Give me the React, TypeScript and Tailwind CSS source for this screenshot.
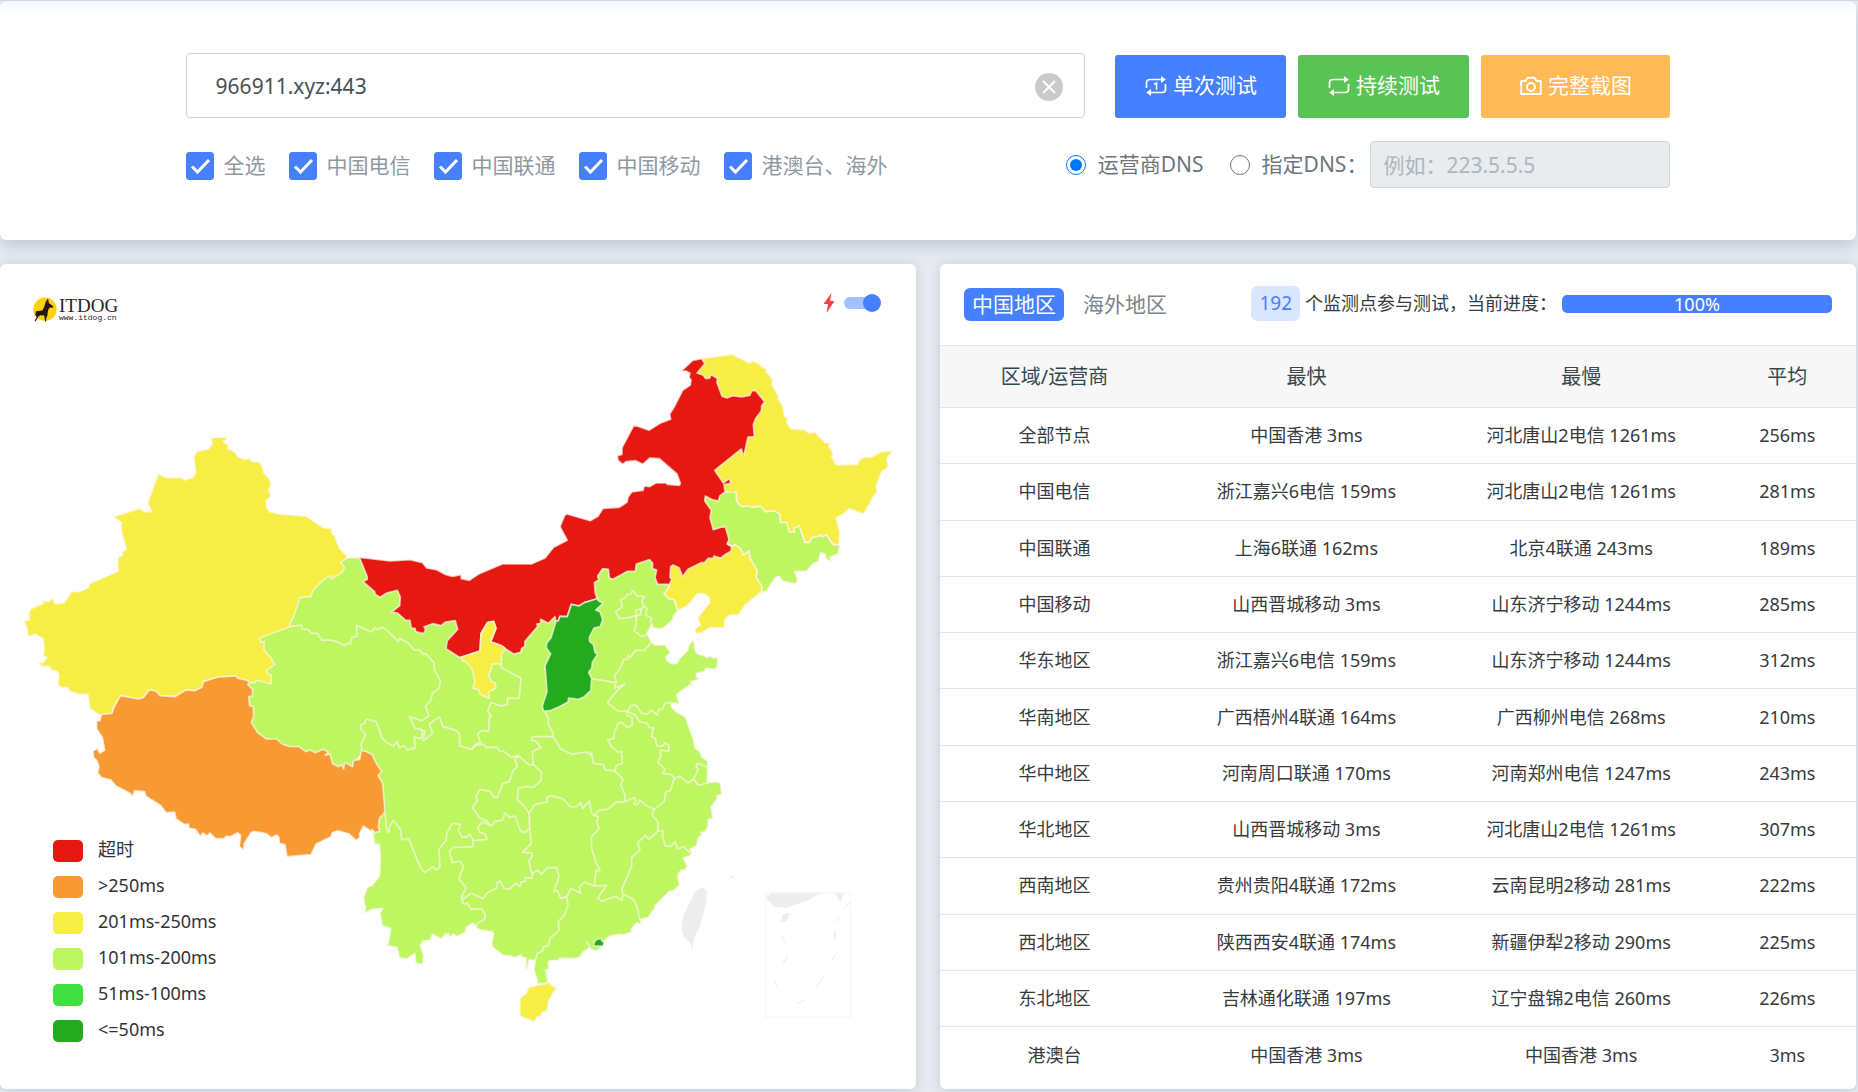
import React, { useState } from 'react';

const font = 'font-["Noto_Sans","Noto_Sans_CJK_SC",sans-serif]';

const operators = ['中国电信', '中国联通', '中国移动', '港澳台、海外'];

const legend = [
  { label: '超时', color: 'bg-[#e61812]' },
  { label: '>250ms', color: 'bg-[#f79a34]' },
  { label: '201ms-250ms', color: 'bg-[#f6ed45]' },
  { label: '101ms-200ms', color: 'bg-[#bef662]' },
  { label: '51ms-100ms', color: 'bg-[#41e041]' },
  { label: '<=50ms', color: 'bg-[#24aa1f]' },
];

const rows = [
  ['全部节点', '中国香港 3ms', '河北唐山2电信 1261ms', '256ms'],
  ['中国电信', '浙江嘉兴6电信 159ms', '河北唐山2电信 1261ms', '281ms'],
  ['中国联通', '上海6联通 162ms', '北京4联通 243ms', '189ms'],
  ['中国移动', '山西晋城移动 3ms', '山东济宁移动 1244ms', '285ms'],
  ['华东地区', '浙江嘉兴6电信 159ms', '山东济宁移动 1244ms', '312ms'],
  ['华南地区', '广西梧州4联通 164ms', '广西柳州电信 268ms', '210ms'],
  ['华中地区', '河南周口联通 170ms', '河南郑州电信 1247ms', '243ms'],
  ['华北地区', '山西晋城移动 3ms', '河北唐山2电信 1261ms', '307ms'],
  ['西南地区', '贵州贵阳4联通 172ms', '云南昆明2移动 281ms', '222ms'],
  ['西北地区', '陕西西安4联通 174ms', '新疆伊犁2移动 290ms', '225ms'],
  ['东北地区', '吉林通化联通 197ms', '辽宁盘锦2电信 260ms', '226ms'],
  ['港澳台', '中国香港 3ms', '中国香港 3ms', '3ms'],
];

// Filled regions, drawn bottom to top
const regions = [
  {
    name: 'mainland',
    fill: '#bef662',
    points:
      '1041,882 1078,880 1110,930 1110,960 1150,960 1215,970 1215,1040 1250,1060 1380,1050 1385,1100 1360,1150 1440,1150 1460,1060 1500,1060 1500,1130 1545,1150 1600,1070 1660,1040 1690,1040 1700,1010 1770,990 1770,940 1810,890 1840,930 1895,905 1900,890 1950,870 1970,890 1980,950 2009,950 2008,968 1992,990 2010,1006 2022,1005 2034,1040 2022,1053 2018,1068 1993,1090 1977,1095 1960,1091 1954,1083 1941,1108 1954,1133 1964,1143 1995,1143 2012,1166 1998,1178 1999,1188 2014,1199 2030,1199 2038,1185 2063,1159 2067,1141 2081,1127 2085,1160 2094,1170 2123,1180 2133,1175 2136,1182 2154,1181 2152,1206 2146,1216 2118,1212 2115,1222 2089,1229 2089,1238 2098,1246 2073,1253 2080,1269 2070,1262 2030,1292 2038,1319 2013,1317 2014,1329 2028,1343 2055,1358 2081,1428 2084,1451 2100,1463 2105,1479 2123,1491 2122,1555 2156,1554 2162,1560 2165,1592 2151,1595 2151,1606 2133,1628 2139,1665 2125,1665 2124,1690 2113,1705 2103,1705 2106,1713 2095,1720 2090,1745 2070,1755 2078,1768 2068,1776 2050,1782 2062,1806 2055,1818 2044,1817 2033,1833 2039,1864 2020,1880 2008,1882 1965,1926 1964,1933 1945,1960 1923,1966 1926,1982 1911,1976 1896,1992 1893,2005 1868,2013 1858,2011 1830,2016 1810,2033 1802,2051 1787,2062 1768,2051 1748,2065 1742,2078 1722,2084 1680,2082 1675,2089 1648,2090 1645,2098 1647,2115 1637,2118 1644,2154 1634,2159 1613,2159 1611,2146 1602,2118 1606,2088 1586,2089 1582,2116 1578,2114 1578,2082 1567,2080 1561,2073 1546,2081 1531,2075 1508,2074 1492,2060 1478,2050 1475,2034 1481,2010 1477,2003 1445,1999 1430,1992 1420,1977 1400,1988 1396,2004 1370,2018 1361,2010 1348,2020 1345,2008 1335,2018 1336,2008 1325,2026 1297,2010 1292,2028 1269,2031 1261,2044 1271,2073 1268,2101 1247,2097 1245,2068 1220,2085 1199,2081 1191,2050 1162,2045 1170,2013 1172,1993 1147,1985 1140,1948 1148,1933 1116,1936 1093,1948 1097,1933 1090,1901 1102,1870 1115,1865 1139,1836 1141,1778 1138,1741 1124,1740 1118,1700 1130,1640 1120,1500 1080,1475 1050,1520 990,1520 960,1480 880,1470 780,1440 740,1390 740,1280 740,1240 790,1240 800,1190 760,1110 860,1050 890,980 970,940 1020,890',
  },
  {
    name: 'jilin',
    fill: '#bef662',
    points:
      '2209,684 2210,711 2225,728 2245,725 2257,730 2282,726 2297,743 2322,739 2341,752 2341,775 2361,775 2368,804 2382,804 2383,791 2398,785 2415,835 2428,835 2434,821 2458,816 2461,810 2465,818 2480,812 2500,842 2517,842 2519,848 2513,870 2490,880 2492,895 2477,884 2476,871 2462,866 2455,893 2440,898 2420,921 2384,923 2393,945 2387,960 2349,951 2336,936 2324,943 2300,981 2283,986 2286,968 2268,941 2271,919 2250,883 2247,861 2230,874 2222,854 2204,842 2195,848 2170,830 2160,800 2120,800 2110,740 2105,700 2112,690 2140,690 2175,675',
  },
  {
    name: 'heilongjiang',
    fill: '#f6ed45',
    points:
      '2105,284 2196,271 2249,298 2257,291 2278,299 2282,307 2300,316 2298,324 2310,335 2318,352 2315,361 2335,395 2334,403 2350,431 2353,458 2363,460 2361,478 2373,494 2412,497 2428,508 2444,504 2476,537 2492,537 2486,548 2500,568 2495,578 2509,603 2573,601 2578,588 2595,580 2615,579 2643,564 2678,561 2660,585 2665,603 2660,613 2646,622 2628,666 2632,682 2615,706 2610,721 2603,726 2592,750 2547,734 2530,750 2509,761 2519,805 2517,842 2500,842 2480,812 2465,818 2461,810 2458,816 2434,821 2428,835 2415,835 2398,785 2383,791 2382,804 2368,804 2361,775 2341,775 2341,752 2322,739 2297,743 2282,726 2257,730 2245,725 2225,728 2210,711 2209,684 2175,684 2150,660 2120,619 2200,540 2230,500 2250,440 2250,400 2200,410 2160,410 2140,360 2110,350 2085,330 2100,300',
  },
  {
    name: 'liaoning',
    fill: '#f6ed45',
    points:
      '2195,848 2204,842 2222,854 2230,874 2247,861 2250,883 2271,919 2268,941 2286,968 2283,986 2278,988 2236,1022 2215,1053 2189,1053 2174,1068 2174,1091 2128,1091 2106,1106 2090,1109 2083,1097 2101,1083 2093,1063 2130,1015 2126,999 2113,989 2092,989 2065,1023 2034,1040 2022,1005 2010,1006 1992,990 2008,968 1995,955 1990,910 2019,890 2048,900 2100,880 2140,860 2180,840',
  },
  {
    name: 'neimenggu',
    fill: '#e61812',
    points:
      '1078,880 1170,891 1230,887 1268,896 1280,912 1310,917 1338,932 1358,937 1383,932 1384,944 1408,949 1438,929 1507,900 1594,900 1635,882 1661,850 1702,829 1680,788 1694,754 1701,750 1771,770 1794,757 1809,733 1858,730 1881,715 1884,700 1895,684 1929,679 1933,666 1948,668 1968,657 1998,657 2002,661 2038,664 2041,658 2031,630 1978,584 1950,582 1928,601 1907,590 1878,593 1868,601 1854,589 1852,575 1866,571 1866,551 1902,483 1947,499 1980,478 2012,466 2009,450 2022,430 2048,379 2071,363 2073,348 2067,340 2070,328 2058,321 2043,322 2078,289 2105,284 2115,299 2091,327 2110,334 2116,343 2128,343 2134,332 2152,343 2151,356 2166,397 2181,402 2198,395 2225,399 2249,394 2256,380 2267,380 2294,413 2285,426 2284,441 2268,462 2260,481 2263,518 2244,519 2231,578 2224,555 2144,619 2170,657 2188,644 2193,658 2172,662 2175,684 2160,695 2155,711 2137,707 2116,696 2114,710 2134,739 2130,761 2140,797 2175,786 2187,826 2181,840 2195,848 2193,862 2178,870 2162,882 2142,876 2140,883 2125,883 2113,896 2103,896 2064,916 2048,938 2037,911 2019,903 2012,908 2010,941 2015,945 2009,961 1973,961 1965,941 1970,918 1957,914 1958,898 1949,887 1909,900 1906,921 1882,922 1868,930 1838,946 1828,942 1825,916 1808,914 1793,936 1796,948 1783,956 1786,988 1791,1001 1789,1005 1753,1016 1737,1026 1714,1021 1702,1058 1680,1057 1675,1070 1667,1072 1665,1058 1645,1078 1622,1066 1622,1078 1610,1080 1614,1086 1575,1132 1574,1148 1565,1153 1562,1165 1541,1170 1517,1155 1505,1145 1472,1133 1488,1093 1481,1072 1462,1076 1443,1109 1440,1161 1385,1179 1377,1179 1338,1154 1342,1130 1373,1096 1366,1070 1337,1074 1323,1085 1298,1079 1272,1088 1277,1098 1270,1109 1248,1103 1245,1093 1234,1093 1230,1069 1216,1068 1193,1047 1175,1044 1199,1025 1201,1000 1192,979 1160,987 1140,1000 1125,990 1124,983 1089,953 1102,946 1101,936',
  },
  {
    name: 'xinjiang',
    fill: '#f6ed45',
    points:
      '633,522 678,519 679,527 669,532 686,544 683,554 706,565 714,578 732,586 750,584 757,594 775,593 785,603 792,628 808,644 813,664 806,679 813,696 799,709 799,726 806,742 836,750 918,757 970,791 995,794 995,808 1004,816 1018,853 1038,873 1041,882 1022,895 1034,911 1026,926 993,945 989,935 965,952 939,979 933,997 899,1001 882,1056 870,1076 870,1088 777,1122 783,1135 793,1132 792,1158 812,1180 825,1202 799,1219 803,1228 814,1234 813,1260 769,1248 766,1256 750,1256 738,1248 714,1243 708,1236 655,1239 610,1253 606,1270 584,1280 558,1278 524,1298 480,1295 468,1281 448,1278 431,1300 415,1305 362,1295 356,1304 341,1332 336,1348 304,1351 300,1354 270,1333 264,1290 237,1291 212,1283 200,1270 184,1271 174,1261 177,1233 170,1221 155,1220 150,1208 128,1207 114,1198 130,1195 141,1182 130,1175 133,1160 130,1124 104,1110 95,1116 84,1115 82,1096 71,1072 88,1067 86,1051 91,1036 130,1018 126,1009 145,1013 158,1003 165,1020 192,1017 215,983 243,982 266,970 268,959 355,922 353,888 357,878 367,875 366,866 379,856 372,827 364,803 364,775 345,762 345,757 419,733 433,743 455,743 443,718 475,629 499,641 546,641 553,649 580,640 587,626 581,578 592,562 625,555 637,540',
  },
  {
    name: 'xizang',
    fill: '#f79a34',
    points:
      '300,1370 304,1351 336,1348 341,1332 356,1304 362,1295 415,1305 431,1300 448,1278 468,1281 480,1295 524,1298 558,1278 584,1280 606,1270 610,1253 655,1239 708,1236 714,1243 738,1248 750,1256 743,1261 758,1276 757,1296 746,1298 749,1325 760,1328 761,1356 754,1376 773,1406 799,1425 830,1425 848,1441 866,1447 897,1448 917,1463 930,1458 946,1466 968,1456 985,1463 976,1474 990,1470 998,1499 1016,1508 1024,1502 1031,1515 1034,1495 1058,1508 1060,1490 1079,1486 1084,1459 1100,1463 1117,1472 1126,1494 1145,1522 1134,1535 1148,1558 1155,1644 1139,1662 1135,1688 1139,1702 1124,1706 1116,1696 1116,1703 1090,1686 1078,1710 1080,1720 1068,1729 1048,1710 1012,1700 997,1706 993,1718 948,1740 933,1772 861,1778 855,1742 838,1738 837,1720 830,1713 814,1721 799,1709 762,1702 753,1706 733,1738 731,1758 718,1748 722,1714 713,1706 690,1718 679,1716 672,1724 647,1724 630,1707 620,1716 608,1707 602,1718 586,1696 566,1692 566,1680 553,1681 528,1664 524,1644 498,1646 483,1625 437,1596 434,1583 404,1580 397,1598 390,1588 348,1566 333,1548 304,1540 293,1527 297,1508 292,1492 281,1480 279,1462 292,1453 300,1468 314,1458 307,1420 290,1394 290,1371',
  },
  {
    name: 'ningxia',
    fill: '#f6ed45',
    points:
      '1385,1179 1440,1161 1443,1109 1462,1076 1481,1072 1488,1093 1472,1133 1505,1145 1517,1155 1504,1170 1504,1200 1475,1200 1475,1210 1466,1233 1472,1251 1485,1256 1488,1273 1467,1283 1468,1304 1440,1290 1435,1276 1419,1273 1425,1253 1417,1216 1398,1193 1388,1191',
  },
  {
    name: 'shanxi',
    fill: '#24aa1f',
    points:
      '1791,1000 1795,1010 1809,1018 1787,1038 1800,1043 1808,1066 1801,1088 1782,1092 1768,1120 1769,1133 1780,1141 1785,1165 1792,1171 1777,1195 1775,1213 1766,1225 1775,1244 1772,1280 1753,1298 1735,1306 1706,1302 1704,1314 1682,1326 1650,1340 1630,1341 1627,1326 1641,1283 1635,1206 1652,1170 1639,1151 1640,1138 1653,1121 1668,1072 1675,1070 1680,1057 1702,1058 1714,1021 1737,1026 1753,1016 1789,1005',
  },
  {
    name: 'hainan',
    fill: '#f6ed45',
    points:
      '1586,2170 1620,2162 1634,2161 1645,2154 1660,2168 1670,2170 1645,2212 1641,2240 1627,2245 1620,2258 1610,2260 1604,2273 1573,2263 1560,2254 1560,2203 1580,2186',
  },
  {
    name: 'hongkong',
    fill: '#24aa1f',
    points: '1781,2046 1782,2036 1790,2026 1805,2023 1805,2031 1812,2033 1810,2046',
  },
];

// Province borders inside the green area
const borders = [
  '870,1088 904,1083 905,1095 924,1096 934,1108 952,1108 966,1129 990,1128 1014,1134 1033,1145 1041,1139 1051,1139 1055,1121 1071,1116 1069,1084 1114,1104 1123,1092 1134,1097 1145,1090 1158,1096 1195,1133 1198,1123 1223,1136 1243,1158 1257,1157 1270,1172 1277,1169 1302,1196 1303,1218 1321,1250 1317,1274 1298,1286 1292,1311 1276,1327 1287,1356 1266,1370 1228,1358 1246,1394 1260,1395 1268,1403 1264,1423 1243,1420 1246,1451 1223,1458 1212,1445 1198,1451 1190,1433 1182,1446 1160,1436 1145,1420 1129,1373 1099,1365 1093,1380 1081,1383 1084,1398 1097,1411 1083,1440 1086,1458',
  '1260,1395 1274,1402 1270,1430 1298,1408 1288,1380 1318,1358 1329,1388 1371,1400 1379,1413 1379,1446 1415,1456 1428,1440 1442,1436 1433,1410 1445,1399 1466,1402 1468,1360 1475,1356 1463,1343 1473,1315 1502,1326 1522,1322 1522,1302 1557,1303 1563,1243 1504,1211 1504,1198',
  '1415,1456 1424,1445 1450,1440 1458,1450 1492,1450 1500,1463 1508,1460 1535,1480 1555,1475 1587,1503 1600,1501 1597,1462 1623,1452 1610,1433 1593,1428 1598,1418 1660,1418',
  '1634,1343 1645,1363 1645,1383 1658,1405 1660,1418 1682,1455 1715,1470 1760,1464 1772,1473 1774,1465 1780,1498 1810,1502 1815,1517 1835,1520 1845,1522 1848,1505 1867,1498 1865,1462 1852,1464 1835,1448 1823,1428 1842,1423 1843,1405 1856,1376 1865,1375 1882,1391 1897,1382 1896,1360 1880,1353 1882,1341 1855,1342 1822,1316 1852,1279 1875,1260 1843,1273 1849,1254 1840,1256 1826,1252 1775,1244',
  '1849,1254 1843,1233 1858,1218 1872,1186 1883,1186 1884,1174 1892,1180 1906,1159 1934,1159 1954,1135',
  '1898,978 1911,996 1934,998 1925,1010 1931,1026 1925,1035 1908,1038 1909,1055 1884,1061 1858,1064 1847,1043 1867,1028 1862,1008 1873,1003 1884,991 1893,990 1898,978',
  '1931,1026 1941,1033 1937,1053 1955,1063 1952,1073 1958,1085',
  '1925,1035 1920,1053 1908,1056 1909,1078 1902,1100 1925,1118 1942,1113',
  '1883,1343 1892,1325 1907,1323 1925,1348 1942,1350 1953,1338 1972,1353 1977,1336 1988,1335 1995,1318 2013,1315',
  '1883,1343 1905,1352 1920,1374 1942,1378 1948,1391 1961,1391 1955,1418 1966,1423 1970,1445 1988,1446 1994,1436 2007,1443 2006,1462 1981,1458 1982,1478 1973,1494 1995,1515 1988,1528 2013,1531 2023,1542 2041,1537 2063,1557 2081,1545 2095,1516 2088,1508 2092,1498 2123,1510',
  '2081,1545 2095,1564 2125,1556',
  '2023,1542 2017,1560 2012,1580 1997,1584 1993,1613 1963,1636',
  '1845,1522 1870,1546 1862,1561 1875,1593 1874,1613 1847,1615 1823,1636 1797,1638 1782,1655',
  '1874,1613 1902,1601 1908,1608 1902,1621 1912,1622 1920,1608 1935,1623 1963,1636',
  '1782,1655 1775,1646 1768,1611 1748,1633 1742,1616 1730,1628 1712,1629 1690,1605 1652,1595 1640,1601 1642,1614 1605,1621 1587,1648',
  '1600,1501 1625,1525 1622,1551 1600,1570 1578,1567 1555,1573 1552,1608 1572,1625 1587,1648 1589,1698 1594,1738 1568,1765 1595,1766 1597,1778 1587,1788 1590,1810 1598,1831',
  '1587,1693 1577,1705 1563,1703 1555,1683 1545,1656 1528,1660 1515,1646 1508,1668 1485,1673 1475,1686 1448,1673 1433,1690 1440,1705 1455,1710 1462,1726 1420,1730 1417,1748 1372,1750 1360,1750 1348,1763 1357,1796 1380,1791 1391,1806 1377,1845 1399,1871 1384,1898 1390,1920',
  '1555,1475 1545,1488 1553,1508 1540,1518 1528,1553 1508,1558 1492,1601 1480,1598 1472,1583 1440,1576 1428,1596 1432,1610 1417,1630 1438,1661 1460,1670 1470,1683',
  '1155,1644 1160,1698 1167,1705 1168,1688 1180,1669 1202,1698 1205,1728 1226,1724 1244,1768 1261,1810 1274,1825 1300,1808 1307,1818 1320,1809 1317,1755 1339,1728 1340,1708 1357,1678 1382,1681 1375,1698 1385,1718 1398,1720 1410,1710 1420,1730',
  '1384,1898 1392,1904 1413,1888 1450,1904 1460,1888 1490,1872 1492,1856 1500,1851 1512,1873 1528,1876 1547,1858 1560,1868 1563,1854 1576,1852 1575,1841 1595,1843 1598,1828 1612,1818 1625,1831 1642,1811 1670,1811 1677,1838 1661,1883 1672,1878 1682,1903 1700,1898 1712,1873 1742,1888 1738,1868 1753,1855 1783,1866 1820,1864 1793,1901 1805,1912 1848,1897 1865,1909 1870,1891 1900,1905 1913,1933 1918,1963 1926,1982',
  '1390,1920 1403,1918 1413,1936 1445,1934 1456,1952 1454,1966 1432,1978 1428,1990',
  '1700,1898 1704,1923 1695,1950 1675,1973 1678,1998 1650,2023 1645,2045 1630,2048 1628,2061 1612,2068 1606,2088',
  '1782,1655 1795,1658 1790,1673 1797,1695 1774,1718 1775,1753 1788,1795 1800,1820 1788,1820 1783,1866',
  '1963,1635 1957,1653 1973,1673 1975,1700 1947,1726 1936,1715 1913,1735 1920,1758 1895,1781 1895,1805 1883,1836 1866,1873 1868,1891',
  '1975,1700 1991,1701 1987,1715 1996,1746 2012,1747 2025,1733 2033,1755 2050,1748 2075,1770',
];

function ChinaMap() {
  return (
    <svg viewBox="0 0 2748 2475" className="block w-full" role="img" aria-label="中国地区">
      <g stroke="#fff6f0" strokeOpacity="0.7" strokeWidth="5" strokeLinejoin="round">
        {regions.map((r) => (
          <polygon key={r.name} points={r.points} fill={r.fill} />
        ))}
        {borders.map((b, i) => (
          <polyline key={i} points={b} fill="none" />
        ))}
        <path d="M1758 2031 L1770 2048 L1766 2052" fill="none" />
      </g>
      <g fill="#ededed">
        <path d="M2107 1870 L2124 1884 L2119 1898 L2121 1910 L2110 1950 L2099 1990 L2083 2018 L2076 2058 L2071 2038 L2051 2018 L2045 1991 L2049 1958 L2085 1883 Z" />
        <path d="M2186 1842 L2198 1834 L2202 1841 Z" />
        {/* 南海诸岛 */}
        <path d="M2298 1900 L2314 1887 L2465 1887 L2420 1910 L2358 1932 L2322 1929 Z" />
        <path d="M2505 1887 L2533 1887 L2521 1915 Z" />
        <path d="M2348 1951 L2370 1946 L2360 1971 L2341 1976 Z" />
        <path d="M2502 2001 L2508 2001 L2508 2025 L2502 2025 Z" />
      </g>
      <g stroke="#efefef" strokeWidth="4" fill="none">
        <path d="M2551 1914 L2534 1934 M2519 1956 L2509 1972 M2346 2015 L2354 2038 M2364 2078 L2347 2098 M2506 2070 L2495 2090 M2323 2146 L2330 2166 M2470 2138 L2449 2170 M2392 2218 L2414 2209" />
        <rect x="2297" y="1886" width="255" height="374" stroke="#f7f7f7" />
      </g>
    </svg>
  );
}

function Logo() {
  return (
    <a href="#" className="flex items-center gap-[2px] text-[#2b2223]">
      <svg viewBox="0 0 72 74" className="h-[25px] w-6">
        <circle cx="36" cy="36" r="35" fill="#fdd20a" />
        <path
          d="M45 4 L48 18 L61 27 L60 31 L49 32 L45 40 L43 56 L40 62 L39 73 L36 73 L34 55 L22 54 L16 58 L12 66 L7 73 L5 70 L11 61 L7 52 L9 42 L28 40 L34 28 L38 14 Z"
          fill="#231815"
        />
      </svg>
      <span className="flex flex-col">
        <span className="font-['Liberation_Serif',serif] text-[19px] leading-4">ITDOG</span>
        <span className="font-['Liberation_Mono',monospace] text-[8px] leading-[8px]">www.itdog.cn</span>
      </span>
    </a>
  );
}

function CheckItem({ label, checked, onChange }: { label: string; checked: boolean; onChange: () => void }) {
  return (
    <label className="flex items-center gap-[10px] whitespace-nowrap text-[#8f98a1]">
      <span className="relative flex size-7">
        <input
          type="checkbox"
          checked={checked}
          onChange={onChange}
          className="size-7 appearance-none rounded-[3px] border border-[#4680ff] checked:bg-[#4680ff]"
        />
        {checked && (
          <svg viewBox="0 0 28 28" className="pointer-events-none absolute inset-0" fill="none" stroke="#fff" strokeWidth="3">
            <path d="M6 14.5 L11.5 20 L23 8" />
          </svg>
        )}
      </span>
      {label}
    </label>
  );
}

function RepeatIcon({ once }: { once?: boolean }) {
  return (
    <svg viewBox="0 0 22 22" className="size-[22px]" fill="none" stroke="currentColor" strokeWidth="1.7">
      <path d="M1.500 13 V8 Q1.500 4.500 5 4.500 H18" />
      <path d="M20.500 9 V14 Q20.500 17.500 17 17.500 H4" />
      <path d="M16 1 L20.800 4.500 L16 8 Z" fill="currentColor" stroke="none" />
      <path d="M6 14 L1.200 17.500 L6 21 Z" fill="currentColor" stroke="none" />
      {once && <path d="M9 9.200 L11.500 8 V14.500" strokeWidth="1.600" />}
    </svg>
  );
}

function CameraIcon() {
  return (
    <svg viewBox="0 0 22 22" className="size-[22px]" fill="none" stroke="currentColor" strokeWidth="1.9">
      <path d="M1.200 6 H5.500 L7.500 2.800 H14.500 L16.500 6 H20.800 V19 H1.200 Z" strokeLinejoin="round" />
      <circle cx="11" cy="12" r="4" />
    </svg>
  );
}

export default function App() {
  const [host, setHost] = useState('966911.xyz:443');
  const [selected, setSelected] = useState<string[]>(operators);
  const [dns, setDns] = useState<'operator' | 'custom'>('operator');
  const [area, setArea] = useState<'china' | 'oversea'>('china');
  const [fast, setFast] = useState(true);

  const allSelected = selected.length === operators.length;

  const toggle = (name: string) => {
    setSelected((prev) => (prev.includes(name) ? prev.filter((n) => n !== name) : [...prev, name]));
  };

  return (
    <div className={`${font} min-h-screen bg-[#e8ecf1] pt-px pr-0.5 text-[#373a3c] shadow-[inset_0_1px_0_#d3dbe2]`}>
      {/* Test form */}
      <section className="rounded-md bg-white bg-linear-to-b from-[#f4f6f7] to-white to-[12px] py-[52px] shadow-[0_6px_16px_rgba(69,90,130,0.25)]">
        <div className="mx-auto w-4/5 text-[21px]">
          <div className="flex items-center gap-[30px]">
            <div className="relative flex-1">
              <input
                type="text"
                aria-label="域名"
                value={host}
                onChange={(e) => setHost(e.target.value)}
                className="h-[65px] w-full rounded-[4px] border border-[#ced0da] bg-white px-[29px] text-[21px] text-[#495057] outline-none"
              />
              <button
                type="button"
                aria-label="清空"
                onClick={() => setHost('')}
                className="absolute top-5 right-[22px] size-7 rounded-full bg-[#cacaca] text-white"
              >
                <svg viewBox="0 0 28 28" fill="none" stroke="currentColor" strokeWidth="2">
                  <path d="M8 8 L20 20 M20 8 L8 20" />
                </svg>
              </button>
            </div>
            <div className="flex gap-3 pt-px text-white">
              <button type="button" className="flex h-[63px] w-[171px] items-center justify-center gap-1.5 rounded-[3px] bg-[#4680ff]">
                <RepeatIcon once />
                单次测试
              </button>
              <button type="button" className="flex h-[63px] w-[171px] items-center justify-center gap-1.5 rounded-[3px] bg-[#5ac356]">
                <RepeatIcon />
                持续测试
              </button>
              <button type="button" className="flex h-[63px] w-[189px] items-center justify-center gap-1.5 rounded-[3px] bg-[#ffb957]">
                <CameraIcon />
                完整截图
              </button>
            </div>
          </div>

          <div className="mt-[23px] flex items-center justify-between">
            <div className="flex gap-[23px] pt-0.5">
              <CheckItem label="全选" checked={allSelected} onChange={() => setSelected(allSelected ? [] : operators)} />
              {operators.map((name) => (
                <CheckItem key={name} label={name} checked={selected.includes(name)} onChange={() => toggle(name)} />
              ))}
            </div>
            <div className="flex items-center whitespace-nowrap text-[#6c757d]">
              <label className="mr-[26px] flex items-center gap-3">
                <input type="radio" name="dns" className="size-5" checked={dns === 'operator'} onChange={() => setDns('operator')} />
                运营商DNS
              </label>
              <label className="mr-[3px] flex items-center gap-3">
                <input type="radio" name="dns" className="size-5" checked={dns === 'custom'} onChange={() => setDns('custom')} />
                指定DNS：
              </label>
              <input
                type="text"
                aria-label="指定DNS"
                placeholder="例如：223.5.5.5"
                disabled={dns === 'operator'}
                className="h-[47px] w-[300px] rounded-[4px] border border-[#ced4da] bg-white px-3 text-[21px] placeholder:text-[#adb5bd] disabled:bg-[#e9ecef]"
              />
            </div>
          </div>
        </div>
      </section>

      <div className="mt-6 grid grid-cols-2 gap-6">
        {/* Map */}
        <section className="relative rounded-md bg-white shadow-[0_1px_12px_rgba(69,90,130,0.25)]">
          <ChinaMap />
          <div className="absolute inset-x-0 top-0 flex items-start justify-between pt-[29px] pr-9 pl-[33px]">
            <div className="pt-1">
              <Logo />
            </div>
            <label className="flex items-center gap-[9px]">
              <svg viewBox="0 0 12 20" className="h-5 w-3" fill="#f5433c">
                <path d="M8.500 0 L0.500 11 H5 L3.500 20 L11.500 8 H7 Z" />
              </svg>
              <span className="relative flex items-center">
                <input
                  type="checkbox"
                  role="switch"
                  aria-label="快速模式"
                  checked={fast}
                  onChange={() => setFast(!fast)}
                  className="h-3 w-9 appearance-none rounded-full bg-[#cccccc] checked:bg-[#a3c0ff]"
                />
                <span className={`pointer-events-none absolute size-[18px] rounded-full bg-[#4680ff] ${fast ? '-right-px' : 'left-0'}`} />
              </span>
            </label>
          </div>
          <ul className="absolute bottom-[46px] left-[53px] flex flex-col gap-3 text-[18px] text-[#333333]">
            {legend.map((item) => (
              <li key={item.label} className="flex h-6 items-center gap-[15px]">
                <span className={`h-[22px] w-[30px] rounded-[5px] ${item.color}`} />
                <span className="pb-[3px] leading-[21px]">{item.label}</span>
              </li>
            ))}
          </ul>
        </section>

        {/* Result table */}
        <section className="rounded-md bg-white shadow-[0_1px_12px_rgba(69,90,130,0.25)]">
          <div className="flex h-[81px] items-center px-6 pb-0.5 whitespace-nowrap">
            <div className="flex gap-[11px] pt-0.5 text-[21px] leading-[33px]">
              <button
                type="button"
                onClick={() => setArea('china')}
                className={`rounded-md px-2 ${area === 'china' ? 'bg-[#4680ff] text-white' : 'text-[#7b848d]'}`}
              >
                中国地区
              </button>
              <button
                type="button"
                onClick={() => setArea('oversea')}
                className={`rounded-md px-2 ${area === 'oversea' ? 'bg-[#4680ff] text-white' : 'text-[#7b848d]'}`}
              >
                海外地区
              </button>
            </div>
            <div className="ml-auto flex items-center text-[18px]">
              <span className="mr-[5px] rounded-md bg-[#dae5ff] px-2 text-[19px] leading-[35px] text-[#4680ff]">192</span>
              个监测点参与测试，当前进度：
              <div
                role="progressbar"
                aria-valuenow={100}
                className="ml-[5px] h-[18px] w-[270px] rounded-[5px] bg-[#4680ff] text-center leading-[18px] text-white"
              >
                100%
              </div>
            </div>
          </div>
          <table className="h-[738px] w-full table-fixed border-collapse text-center text-[18px]">
            <thead>
              <tr className="h-[62px] border-y border-[#dfe6ed] bg-[#f7f7f7] text-[20px] text-[#37474f]">
                <th className="w-1/4 font-normal">区域/运营商</th>
                <th className="w-[30%] font-normal">最快</th>
                <th className="w-[30%] font-normal">最慢</th>
                <th className="w-[15%] font-normal">平均</th>
              </tr>
            </thead>
            <tbody>
              {rows.map((row) => (
                <tr key={row[0]} className="h-14 border-b border-[#dfe6ed] last:border-b-0">
                  {row.map((cell, i) => (
                    <td key={i}>{cell}</td>
                  ))}
                </tr>
              ))}
            </tbody>
          </table>
        </section>
      </div>
    </div>
  );
}
